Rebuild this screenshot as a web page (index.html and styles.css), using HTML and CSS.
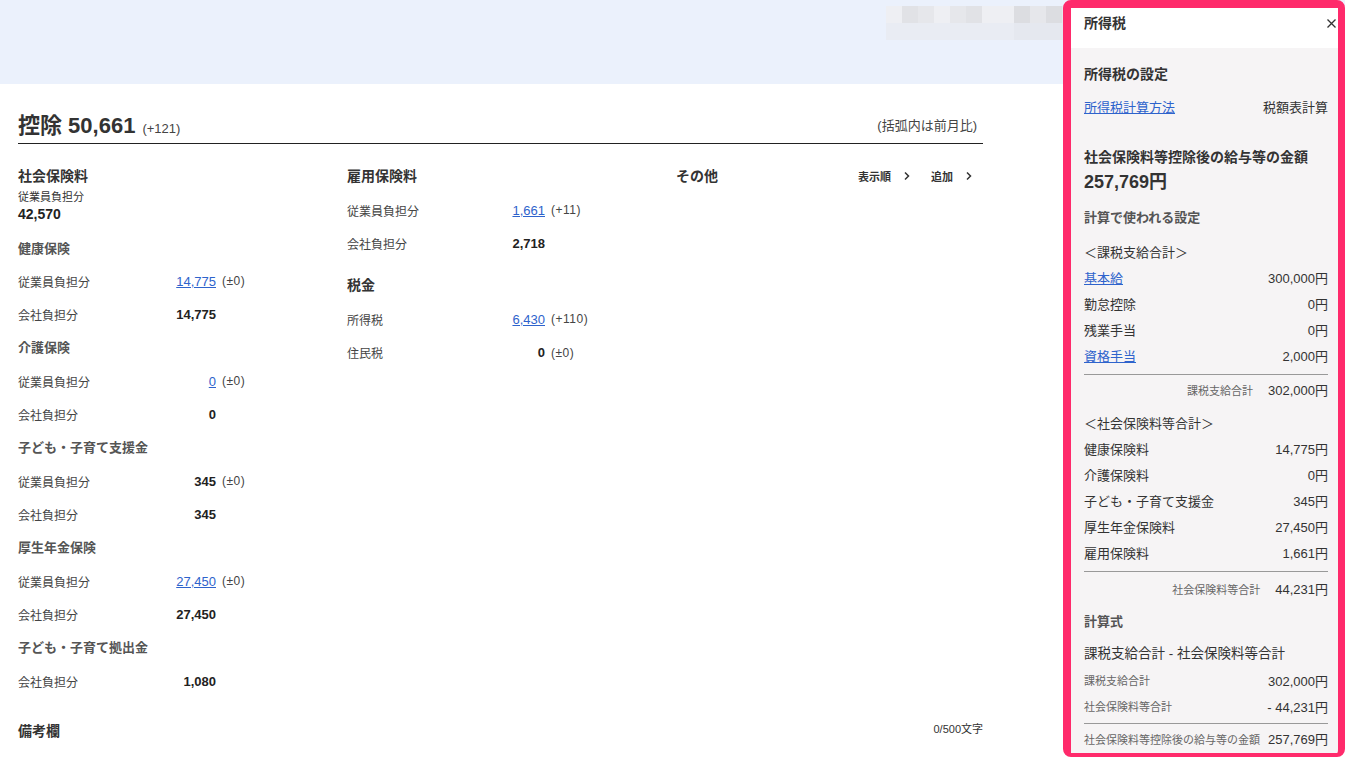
FILE: index.html
```html
<!DOCTYPE html>
<html lang="ja">
<head>
	<meta charset="utf-8">
	<title>控除</title>
	<link rel="stylesheet" href="styles.css">
</head>
<body>
	<div class="band">
		<div class="mosaic">
			<i class="m1"></i><i class="m2"></i><i class="m3"></i><i class="m1"></i><i class="m3"></i><i class="m2"></i><i class="m1"></i><i class="m1"></i><i class="m4"></i><i class="m3"></i><i class="m4"></i><i class="m3"></i>
			<i class="m5"></i><i class="m5"></i><i class="m5"></i><i class="m5"></i><i class="m5"></i><i class="m5"></i><i class="m5"></i><i class="m5"></i><i class="m6"></i><i class="m6"></i><i class="m6"></i><i class="m6"></i>
		</div>
	</div>

	<main class="page">
		<div class="title-row">
			<h1 class="title">控除 50,661<span class="title-diff">(+121)</span></h1>
			<span class="note">(括弧内は前月比)</span>
		</div>

		<div class="cols">
			<!-- 社会保険料 -->
			<section class="col">
				<h2 class="col-head">社会保険料</h2>
				<div class="sub-label">従業員負担分</div>
				<div class="sub-total">42,570</div>
				<div class="rows rows-first">
					<div class="group">健康保険</div>
					<div class="row"><span class="lbl">従業員負担分</span><a class="val link" href="#">14,775</a><span class="diff">(±0)</span></div>
					<div class="row"><span class="lbl">会社負担分</span><span class="val">14,775</span></div>
					<div class="group">介護保険</div>
					<div class="row"><span class="lbl">従業員負担分</span><a class="val link" href="#">0</a><span class="diff">(±0)</span></div>
					<div class="row"><span class="lbl">会社負担分</span><span class="val">0</span></div>
					<div class="group">子ども・子育て支援金</div>
					<div class="row"><span class="lbl">従業員負担分</span><span class="val">345</span><span class="diff">(±0)</span></div>
					<div class="row"><span class="lbl">会社負担分</span><span class="val">345</span></div>
					<div class="group">厚生年金保険</div>
					<div class="row"><span class="lbl">従業員負担分</span><a class="val link" href="#">27,450</a><span class="diff">(±0)</span></div>
					<div class="row"><span class="lbl">会社負担分</span><span class="val">27,450</span></div>
					<div class="group">子ども・子育て拠出金</div>
					<div class="row"><span class="lbl">会社負担分</span><span class="val">1,080</span></div>
				</div>
			</section>

			<!-- 雇用保険料 / 税金 -->
			<section class="col">
				<h2 class="col-head">雇用保険料</h2>
				<div class="rows">
					<div class="row"><span class="lbl">従業員負担分</span><a class="val link" href="#">1,661</a><span class="diff">(+11)</span></div>
					<div class="row"><span class="lbl">会社負担分</span><span class="val">2,718</span></div>
				</div>
				<h2 class="col-head col-head-gap">税金</h2>
				<div class="rows">
					<div class="row"><span class="lbl">所得税</span><a class="val link" href="#">6,430</a><span class="diff">(+110)</span></div>
					<div class="row"><span class="lbl">住民税</span><span class="val">0</span><span class="diff">(±0)</span></div>
				</div>
			</section>

			<!-- その他 -->
			<section class="col">
				<div class="col-head-row">
					<h2 class="col-head">その他</h2>
					<div class="actions">
						<a class="action" href="#">表示順<svg width="6" height="10" viewBox="0 0 6 10"><polyline points="1,1.5 4.5,5 1,8.5" fill="none" stroke="#333" stroke-width="1.5"/></svg></a>
						<a class="action" href="#">追加<svg width="6" height="10" viewBox="0 0 6 10"><polyline points="1,1.5 4.5,5 1,8.5" fill="none" stroke="#333" stroke-width="1.5"/></svg></a>
					</div>
				</div>
			</section>
		</div>

		<div class="remarks">
			<h2 class="col-head">備考欄</h2>
			<span class="count">0/500文字</span>
		</div>
	</main>

	<aside class="panel">
		<div class="panel-head">
			<span class="panel-title">所得税</span>
			<svg class="close" width="9" height="9" viewBox="0 0 9 9"><path d="M0.5 0.5 L8.5 8.5 M8.5 0.5 L0.5 8.5" stroke="#333" stroke-width="1.3"/></svg>
		</div>
		<div class="panel-body">
			<div class="p-title">所得税の設定</div>
			<div class="p-setting"><a class="link" href="#">所得税計算方法</a><span>税額表計算</span></div>

			<div class="p-title p-title-gap">社会保険料等控除後の給与等の金額</div>
			<div class="p-amount">257,769円</div>

			<div class="p-label">計算で使われる設定</div>
			<div class="p-bracket">＜課税支給合計＞</div>
			<div class="p-row"><a class="link" href="#">基本給</a><span>300,000円</span></div>
			<div class="p-row"><span>勤怠控除</span><span>0円</span></div>
			<div class="p-row"><span>残業手当</span><span>0円</span></div>
			<div class="p-row"><a class="link" href="#">資格手当</a><span>2,000円</span></div>
			<div class="p-rule"></div>
			<div class="p-sum"><span class="small">課税支給合計</span><span>302,000円</span></div>

			<div class="p-bracket p-bracket-gap">＜社会保険料等合計＞</div>
			<div class="p-row"><span>健康保険料</span><span>14,775円</span></div>
			<div class="p-row"><span>介護保険料</span><span>0円</span></div>
			<div class="p-row"><span>子ども・子育て支援金</span><span>345円</span></div>
			<div class="p-row"><span>厚生年金保険料</span><span>27,450円</span></div>
			<div class="p-row"><span>雇用保険料</span><span>1,661円</span></div>
			<div class="p-rule"></div>
			<div class="p-sum p-sum-gap"><span class="small">社会保険料等合計</span><span>44,231円</span></div>

			<div class="p-label p-label-gap">計算式</div>
			<div class="p-formula">課税支給合計 - 社会保険料等合計</div>
			<div class="p-row p-row-top"><span class="small">課税支給合計</span><span>302,000円</span></div>
			<div class="p-row"><span class="small">社会保険料等合計</span><span>- 44,231円</span></div>
			<div class="p-rule p-rule-tight"></div>
			<div class="p-total"><span class="small">社会保険料等控除後の給与等の金額</span><span>257,769円</span></div>
		</div>
	</aside>
</body>
</html>
```

FILE: styles.css
```css
* {
	box-sizing: border-box;
}
body {
	margin: 0;
	font-family: "Liberation Sans", "Noto Sans CJK JP", sans-serif;
	color: #333;
	background-color: #FFFFFF;
}
a {
	text-decoration: none;
	color: inherit;
}
.link {
	color: #2e63cc;
	text-decoration: underline;
	font-weight: normal;
}

/* top band */
.band {
	height: 84px;
	background-color: #ebf1fc;
	position: relative;
}
.mosaic {
	position: absolute;
	left: 886px;
	top: 6px;
	display: grid;
	grid-template-columns: repeat(12, 16px);
	grid-auto-rows: 17px;
}
.mosaic i { display: block; }
.m1 { background-color: #eeeff3; }
.m2 { background-color: #e1e2e6; }
.m3 { background-color: #e6e7eb; }
.m4 { background-color: #dcdde1; }
.m5 { background-color: #e9ecf3; }
.m6 { background-color: #e5e8ef; }

/* main */
.page {
	width: 1001px;
	padding: 0 18px;
}
.title-row {
	display: flex;
	align-items: center;
	justify-content: space-between;
	padding-top: 27px;
	padding-bottom: 2px;
	border-bottom: 1px solid #222;
}
.title {
	margin: 0;
	font-size: 22px;
	line-height: 30px;
	font-weight: bold;
	color: #333;
}
.title-diff {
	font-size: 13px;
	line-height: 1;
	font-weight: normal;
	color: #444;
	margin-left: 7px;
}
.note {
	font-size: 13px;
	line-height: 20px;
	color: #444;
	padding-right: 6px;
}
.cols {
	display: grid;
	grid-template-columns: repeat(3, 307px);
	column-gap: 22px;
	margin-top: 22px;
}
.col-head {
	margin: 0;
	font-size: 14px;
	line-height: 20px;
	font-weight: bold;
	color: #333;
}
.col-head-gap {
	margin-top: 15px;
}
.sub-label {
	font-size: 11px;
	line-height: 16px;
	margin-top: 3px;
	color: #333;
}
.sub-total {
	font-size: 14px;
	line-height: 18px;
	font-weight: bold;
	color: #222;
}
.rows {
	margin-top: 7.5px;
}
.rows-first {
	margin-top: 8.5px;
}
.group {
	height: 33.33px;
	line-height: 33.33px;
	font-size: 13px;
	font-weight: bold;
	color: #555;
}
.row {
	display: flex;
	align-items: center;
	height: 33.33px;
	font-size: 12px;
}
.lbl {
	width: 140px;
	color: #444;
}
.val {
	width: 58px;
	text-align: right;
	font-size: 13px;
	font-weight: bold;
	color: #222;
}
.val.link {
	color: #2e63cc;
	font-weight: normal;
}
.diff {
	margin-left: 6px;
	color: #444;
	letter-spacing: 0.5px;
}
.col-head-row {
	display: flex;
	align-items: center;
	justify-content: space-between;
	padding-right: 11px;
}
.actions {
	display: flex;
	gap: 21px;
}
.action {
	display: flex;
	align-items: center;
	gap: 13px;
	font-size: 11px;
	font-weight: bold;
	color: #333;
}
.remarks {
	display: flex;
	align-items: center;
	justify-content: space-between;
	margin-top: 23px;
}
.count {
	font-size: 11px;
	color: #333;
	margin-top: -6px;
}

/* side panel */
.panel {
	position: fixed;
	top: 0;
	left: 1063px;
	width: 282px;
	height: 757px;
	border: 7px solid #ff2a6b;
	border-top-width: 8px;
	border-left-width: 8px;
	border-bottom-width: 4px;
	border-radius: 8px;
	background-color: #f6f4f5;
	overflow: hidden;
}
.panel-head {
	height: 40px;
	background-color: #FFFFFF;
	display: flex;
	justify-content: space-between;
	align-items: flex-start;
	padding: 6px 2px 0 13px;
}
.panel-title {
	font-size: 14px;
	line-height: 18px;
	font-weight: bold;
	color: #333;
}
.close {
	margin-top: 5px;
}
.panel-body {
	padding: 0 10px 0 13px;
	font-size: 13px;
	color: #333;
}
.p-title {
	font-size: 14px;
	line-height: 20px;
	font-weight: bold;
	margin-top: 16px;
}
.p-title-gap {
	margin-top: 29px;
}
.p-setting {
	display: flex;
	justify-content: space-between;
	line-height: 20px;
	margin-top: 14px;
}
.p-amount {
	font-size: 18px;
	line-height: 24px;
	font-weight: bold;
	margin-top: 3px;
}
.p-label {
	font-weight: bold;
	color: #555;
	line-height: 20px;
	margin-top: 14px;
}
.p-label-gap {
	margin-top: 12px;
}
.p-bracket {
	line-height: 20px;
	margin-top: 15px;
	margin-bottom: 1px;
}
.p-bracket-gap {
	margin-top: 13px;
}
.p-row {
	display: flex;
	justify-content: space-between;
	align-items: center;
	height: 26px;
}
.p-row-top {
	margin-top: 3px;
}
.p-rule {
	height: 1px;
	background-color: #999;
	margin-top: 6px;
}
.p-rule-tight {
	margin-top: 4px;
}
.p-sum {
	display: flex;
	justify-content: flex-end;
	align-items: center;
	gap: 15px;
	line-height: 20px;
	margin-top: 6px;
}
.p-sum-gap {
	margin-top: 8px;
}
.p-formula {
	font-size: 13.5px;
	line-height: 20px;
	margin-top: 12px;
}
.p-total {
	display: flex;
	justify-content: space-between;
	align-items: center;
	line-height: 20px;
	margin-top: 6px;
}
.small {
	font-size: 11px;
	color: #666;
}
```
